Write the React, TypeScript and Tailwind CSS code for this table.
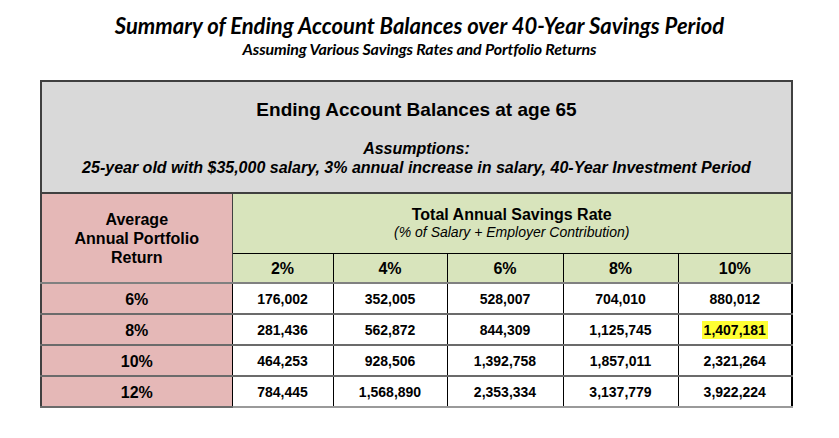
const rates = ['2%', '4%', '6%', '8%', '10%'];

const rows = [
  { ret: '6%', values: ['176,002', '352,005', '528,007', '704,010', '880,012'] },
  { ret: '8%', values: ['281,436', '562,872', '844,309', '1,125,745', '1,407,181'] },
  { ret: '10%', values: ['464,253', '928,506', '1,392,758', '1,857,011', '2,321,264'] },
  { ret: '12%', values: ['784,445', '1,568,890', '2,353,334', '3,137,779', '3,922,224'] },
];

const colWidths = ['w-[101px]', 'w-[114px]', 'w-[116px]', 'w-[115px]', 'w-[114px]'];

export default function App() {
  return (
    <div className="w-[839px] h-[438px] bg-white text-black">
      {/* Title */}
      <div className="pt-[12px] text-center font-['Lato',sans-serif] italic font-bold">
        <h1 className="text-[22px] leading-[28px]">
          Summary of Ending Account Balances over 40-Year Savings Period
        </h1>
        <p className="text-[16px] leading-[18px] tracking-[-0.15px]">
          Assuming Various Savings Rates and Portfolio Returns
        </p>
      </div>

      {/* Table */}
      <div className="ml-[40px] mt-[22px] w-[752px] font-['Liberation_Sans',Arial,sans-serif] font-bold">
        <table className="w-full border-collapse table-fixed">
          <colgroup>
            <col className="w-[191px]" />
            {colWidths.map((w, i) => (
              <col key={i} className={w} />
            ))}
          </colgroup>
          <tbody>
            <tr>
              <td
                colSpan={6}
                className="h-[112px] bg-[#d9d9d9] border-2 border-[#404040] text-center align-top"
              >
                <div className="pt-[17px] text-[19px] leading-[22px]">Ending Account Balances at age 65</div>
                <div className="mt-[18px] text-[16px] leading-[19px] italic">Assumptions:</div>
                <div className="text-[16px] leading-[19px] italic">
                  25-year old with $35,000 salary, 3% annual increase in salary, 40-Year Investment Period
                </div>
              </td>
            </tr>
            <tr>
              <td
                rowSpan={2}
                className="bg-[#e5b8b7] border-l-2 border-r border-b-2 border-[#404040] border-b-[#808080] text-center text-[16px] leading-[19px] align-middle"
              >
                Average
                <br />
                Annual Portfolio
                <br />
                Return
              </td>
              <td
                colSpan={5}
                className="h-[60px] bg-[#d8e4bc] border-r-2 border-b border-[#404040] border-b-black text-center"
              >
                <div className="text-[16px] leading-[19px]">Total Annual Savings Rate</div>
                <div className="text-[14px] leading-[17px] italic font-normal">
                  (% of Salary + Employer Contribution)
                </div>
              </td>
            </tr>
            <tr>
              {rates.map((r, i) => (
                <td
                  key={r}
                  className={`h-[30px] bg-[#d8e4bc] border-b-2 border-b-[#808080] border-l border-l-black text-center text-[16px] pt-[2px] ${
                    i === 4 ? 'border-r-2 border-r-[#404040]' : ''
                  }`}
                >
                  {r}
                </td>
              ))}
            </tr>
            {rows.map((row, ri) => (
              <tr key={row.ret}>
                <td className="h-[31px] bg-[#e5b8b7] border-l-2 border-l-[#404040] border-r border-r-black border-b-2 border-b-[#6b6b6b] text-center text-[16px] pt-[2px]">
                  {row.ret}
                </td>
                {row.values.map((v, i) => (
                  <td
                    key={i}
                    className={`h-[31px] bg-white border-l border-l-black border-b-2 ${
                      ri === rows.length - 1 ? 'border-b-[#9a9a9a]' : 'border-b-[#6b6b6b]'
                    } text-center text-[14px] pt-[2px] ${i === 4 ? 'border-r-2 border-r-black' : ''}`}
                  >
                    {ri === 1 && i === 4 ? (
                      <span className="bg-[#ffff33] px-[2px] py-[1px]">{v}</span>
                    ) : (
                      v
                    )}
                  </td>
                ))}
              </tr>
            ))}
          </tbody>
        </table>
      </div>
    </div>
  );
}
